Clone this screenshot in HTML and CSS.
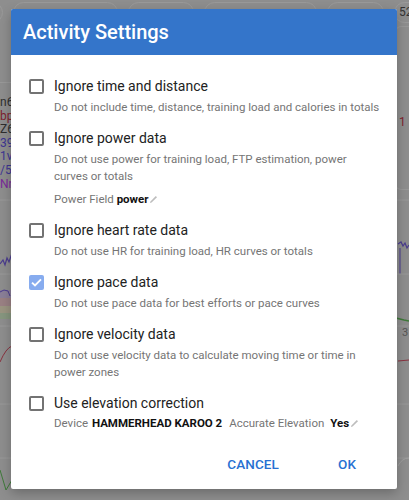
FILE: index.html
```html
<!DOCTYPE html>
<html>
<head>
<meta charset="utf-8">
<link rel="stylesheet" href="styles.css">
</head>
<body>
<div class="page">
  <div class="chips">
    <span class="chip c0"></span>
    <span class="chip c1"></span>
    <span class="chip c2"></span>
    <span class="chip c3"></span>
    <span class="chip c4"></span>
    <span class="chip c5">52</span>
  </div>
  <div class="cards">
    <div class="lcard">
      <div class="frag dark">n6</div>
      <div class="frag red">bp</div>
      <div class="frag dark">Z6</div>
      <div class="frag blue">39</div>
      <div class="frag blue">1v</div>
      <div class="frag blue">/5</div>
      <div class="frag purple">Nr</div>
    </div>
    <div class="rcard"><span class="frag red">1</span></div>
  </div>
  <svg class="charts" width="409" height="310" viewBox="0 0 409 310">
    <line x1="0" y1="10" x2="409" y2="10" stroke="#999" stroke-width="1"/>
    <polyline points="0,74 3,70 5,75 7,68 9,72 11,66 13,70" fill="none" stroke="#4b3c8f" stroke-width="1.2"/>
    <polyline points="398,54 401,52 403,56 405,53 407,58 409,55" fill="none" stroke="#4b3c8f" stroke-width="1.2"/>
    <line x1="400" y1="58" x2="400" y2="84" stroke="#4b3c8f" stroke-width="1"/>
    <line x1="0" y1="84" x2="409" y2="84" stroke="#999" stroke-width="1"/>
    <rect x="0" y="100" width="12" height="8" fill="#8b7f98"/>
    <rect x="0" y="108" width="12" height="8" fill="#9a8184"/>
    <rect x="0" y="116" width="12" height="7" fill="#9b9582"/>
    <rect x="0" y="123" width="12" height="6" fill="#87967f"/>
    <polyline points="0,102 4,100 8,101 10,106" fill="none" stroke="#4b3c8f" stroke-width="1"/>
    <line x1="0" y1="136" x2="409" y2="136" stroke="#999" stroke-width="1"/>
    <polyline points="396,128 400,129 404,130 409,131" fill="none" stroke="#3f7a3a" stroke-width="1.3"/>
    <text x="402" y="146" font-family="Roboto, sans-serif" font-size="11" fill="#555">3</text>
    <path d="M0,172 Q6,158 12,156" fill="none" stroke="#8a3240" stroke-width="1"/>
    <line x1="398" y1="171" x2="409" y2="170" stroke="#8a3240" stroke-width="1"/>
    <line x1="0" y1="214" x2="409" y2="214" stroke="#999" stroke-width="1"/>
    <line x1="0" y1="268" x2="409" y2="268" stroke="#999" stroke-width="1"/>
    <path d="M398,276 Q402,268 409,268" fill="none" stroke="#a0a0a0" stroke-width="1"/>
    <polyline points="0,280 6,300 12,290" fill="none" stroke="#3f7a3a" stroke-width="1"/>
  </svg>
</div>

<div class="dialog">
  <div class="dlg-head">Activity Settings</div>
  <div class="dlg-body">
    <div class="opt">
      <span class="cb"></span>
      <div class="opt-text">
        <div class="opt-label">Ignore time and distance</div>
        <div class="opt-desc">Do not include time, distance, training load and calories in totals</div>
      </div>
    </div>
    <div class="opt">
      <span class="cb"></span>
      <div class="opt-text">
        <div class="opt-label">Ignore power data</div>
        <div class="opt-desc">Do not use power for training load, FTP estimation, power curves or totals</div>
        <div class="opt-field">Power Field <b>power</b><svg class="pen" width="9" height="9" viewBox="0 0 9 9"><path d="M1 8 L1.4 6.4 L6.8 1 L8 2.2 L2.6 7.6 Z" fill="#bdbdbd"/></svg></div>
      </div>
    </div>
    <div class="opt">
      <span class="cb"></span>
      <div class="opt-text">
        <div class="opt-label">Ignore heart rate data</div>
        <div class="opt-desc">Do not use HR for training load, HR curves or totals</div>
      </div>
    </div>
    <div class="opt">
      <span class="cb checked"><svg width="15" height="15" viewBox="0 0 15 15"><path d="M3 7.6 L6 10.5 L12 4.4" fill="none" stroke="#fff" stroke-width="1.9"/></svg></span>
      <div class="opt-text">
        <div class="opt-label">Ignore pace data</div>
        <div class="opt-desc">Do not use pace data for best efforts or pace curves</div>
      </div>
    </div>
    <div class="opt">
      <span class="cb"></span>
      <div class="opt-text">
        <div class="opt-label">Ignore velocity data</div>
        <div class="opt-desc">Do not use velocity data to calculate moving time or time in power zones</div>
      </div>
    </div>
    <div class="opt last">
      <span class="cb"></span>
      <div class="opt-text">
        <div class="opt-label">Use elevation correction</div>
        <div class="opt-device">Device <b>HAMMERHEAD KAROO 2</b><span class="sp"></span>Accurate Elevation <b class="yes">Yes</b><svg class="pen" width="9" height="9" viewBox="0 0 9 9"><path d="M1 8 L1.4 6.4 L6.8 1 L8 2.2 L2.6 7.6 Z" fill="#bdbdbd"/></svg></div>
      </div>
    </div>
  </div>
  <div class="dlg-actions">
    <button class="btn cancel">CANCEL</button>
    <button class="btn ok">OK</button>
  </div>
</div>
</body>
</html>
```

FILE: styles.css
```css
* { box-sizing: border-box; }
html, body { margin: 0; padding: 0; }
body {
  width: 409px;
  height: 500px;
  overflow: hidden;
  background: #8e8e8e;
  font-family: Roboto, "Liberation Sans", sans-serif;
  position: relative;
}
.page { width: 409px; height: 500px; overflow: hidden; }
.chips {
  display: flex;
  gap: 10px;
  padding-top: 2px;
  height: 26px;
  margin-left: -20px;
}
.chip {
  flex: none;
  height: 21px;
  border: 1px solid #9a9a9a;
  border-radius: 11px;
  font-size: 12px;
  color: #333;
  line-height: 19px;
  padding-left: 4px;
}
.c0 { width: 23px; }
.c1 { width: 105px; }
.c2 { width: 66px; }
.c3 { width: 113px; }
.c4 { width: 57px; }
.c5 { width: 30px; }
.cards {
  display: flex;
  justify-content: space-between;
  height: 164px;
}
.lcard {
  margin-top: 56px;
  border-top: 1px solid #999;
  padding-top: 13px;
  width: 24px;
}
.frag {
  font-size: 12px;
  line-height: 13.6px;
  white-space: nowrap;
}
.dark { color: #2e2e2e; }
.red { color: #7e1f2e; }
.blue { color: #3d3592; }
.purple { color: #7a2a9a; }
.rcard {
  margin-top: 0;
  width: 14px;
  height: 164px;
  border: 1px solid #989898;
  border-right: none;
  border-radius: 6px 0 0 6px;
  padding-top: 84px;
  padding-left: 3px;
}
.charts { display: block; }

.dialog {
  position: absolute;
  left: 11px;
  top: 9px;
  width: 386px;
  height: 480px;
  background: #fff;
  border-radius: 2px;
  box-shadow: 0 4px 12px rgba(0,0,0,0.25);
  display: flex;
  flex-direction: column;
}
.dlg-head {
  background: #3475ca;
  color: #fff;
  height: 46px;
  font-size: 20px;
  font-weight: 500;
  line-height: 46px;
  padding-left: 12px;
  border-radius: 2px 2px 0 0;
}
.dlg-body {
  padding: 21px 15px 0 18px;
}
.opt {
  display: flex;
  gap: 10px;
  margin-bottom: 12.2px;
}
.opt.last { margin-bottom: 0; }
.cb {
  flex: none;
  width: 15px;
  height: 15px;
  margin-top: 3px;
  border: 2px solid #737373;
  border-radius: 2px;
  position: relative;
}
.cb.checked {
  border: none;
  background: #87acef;
}
.cb svg { display: block; }
.opt-text { flex: 1; min-width: 0; }
.opt-label {
  font-size: 14px;
  line-height: 20px;
  color: #222;
}
.opt-desc, .opt-field, .opt-device {
  font-size: 11.5px;
  line-height: 17px;
  color: #757575;
}
.opt-desc { margin-top: 3px; }
.opt-field { margin-top: 5.5px; }
.opt-device { margin-top: 2px; }
.opt-field b, .opt-device b {
  color: #111;
  font-weight: 700;
}
.opt-field b { margin-left: 0; }
.opt-device b { margin-left: 1px; }
.opt-device b.yes { margin-left: 3px; }
.sp { display: inline-block; width: 7px; }
.pen { margin-left: 1px; vertical-align: -1px; }
.dlg-actions {
  margin-top: auto;
  display: flex;
  justify-content: flex-end;
  padding: 0 18px 7px 0;
  gap: 20px;
}
.btn {
  border: none;
  background: transparent;
  font-family: Roboto, "Liberation Sans", sans-serif;
  font-size: 13.5px;
  font-weight: 500;
  color: #2770d2;
  height: 36px;
  min-width: 64px;
  padding: 0 16px;
  letter-spacing: 0.1px;
}
```
